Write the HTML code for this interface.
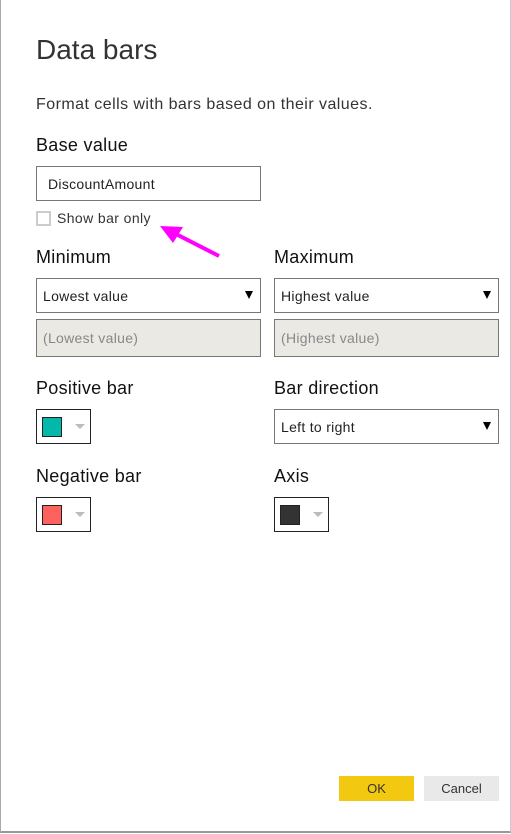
<!DOCTYPE html>
<html><head><style>
*{box-sizing:border-box;margin:0;padding:0}
body{width:511px;height:834px;background:#fff;font-family:"Segoe UI","Liberation Sans",sans-serif;color:#222;position:relative;overflow:hidden}
.frame{position:absolute;left:0;top:0;width:511px;height:833px;border-left:1px solid #aaa;border-bottom:2px solid #999;border-right:1px solid #ccc}
.a{position:absolute;white-space:nowrap}
.box{position:absolute;border:1px solid #777;background:#fff;font-size:14px;padding-left:6px;display:flex;align-items:center;letter-spacing:0.3px}
.dis{background:#eae9e3;color:#888}
.tri{position:absolute;right:7px;top:12px;width:0;height:0;border-left:4px solid transparent;border-right:4px solid transparent;border-top:8px solid #000}
.cb{position:absolute;width:55px;height:35px;border:1px solid #222;background:#fff}
.cb .sw{position:absolute;left:5px;top:7px;width:20px;height:20px;border:1px solid #222}
.cb .dd{position:absolute;left:38px;top:14px;border-left:5px solid transparent;border-right:5px solid transparent;border-top:5px solid #bbb}
.lbl{font-size:18px;color:#111;letter-spacing:0.3px}
</style></head><body>
<div class="frame"></div>
<div class="a" style="left:36px;top:34px;font-size:28px;font-weight:300;color:#333">Data bars</div>
<div class="a" style="left:36px;top:96px;font-size:16px;color:#333;letter-spacing:0.45px">Format cells with bars based on their values.</div>
<div class="a lbl" style="left:36px;top:135px">Base value</div>
<div class="box" style="left:36px;top:166px;width:225px;height:35px;padding-left:11px;color:#222">DiscountAmount</div>
<div class="a" style="left:36px;top:211px;width:15px;height:15px;border:2px solid #ccc"></div>
<div class="a" style="left:57px;top:210px;font-size:14px;color:#333;letter-spacing:0.4px">Show bar only</div>
<svg class="a" style="left:0;top:0" width="511" height="834"><line x1="219" y1="256" x2="172" y2="232" stroke="#f0f" stroke-width="4"/><polygon points="160,226 183,227 173,243" fill="#f0f"/></svg>
<div class="a lbl" style="left:36px;top:247px">Minimum</div>
<div class="a lbl" style="left:274px;top:247px">Maximum</div>
<div class="box" style="left:36px;top:278px;width:225px;height:35px">Lowest value<div class="tri"></div></div>
<div class="box" style="left:274px;top:278px;width:225px;height:35px">Highest value<div class="tri"></div></div>
<div class="box dis" style="left:36px;top:319px;width:225px;height:38px">(Lowest value)</div>
<div class="box dis" style="left:274px;top:319px;width:225px;height:38px">(Highest value)</div>
<div class="a lbl" style="left:36px;top:378px">Positive bar</div>
<div class="a lbl" style="left:274px;top:378px">Bar direction</div>
<div class="cb" style="left:36px;top:409px"><div class="sw" style="background:#01b8aa"></div><div class="dd"></div></div>
<div class="box" style="left:274px;top:409px;width:225px;height:35px">Left to right<div class="tri"></div></div>
<div class="a lbl" style="left:36px;top:466px">Negative bar</div>
<div class="a lbl" style="left:274px;top:466px">Axis</div>
<div class="cb" style="left:36px;top:497px"><div class="sw" style="background:#fd625e"></div><div class="dd"></div></div>
<div class="cb" style="left:274px;top:497px"><div class="sw" style="background:#333"></div><div class="dd"></div></div>
<div class="a" style="left:339px;top:776px;width:75px;height:25px;background:#f2c811;font-size:13px;color:#333;text-align:center;line-height:25px">OK</div>
<div class="a" style="left:424px;top:776px;width:75px;height:25px;background:#e9e9e9;font-size:13px;color:#333;text-align:center;line-height:25px">Cancel</div>
</body></html>
